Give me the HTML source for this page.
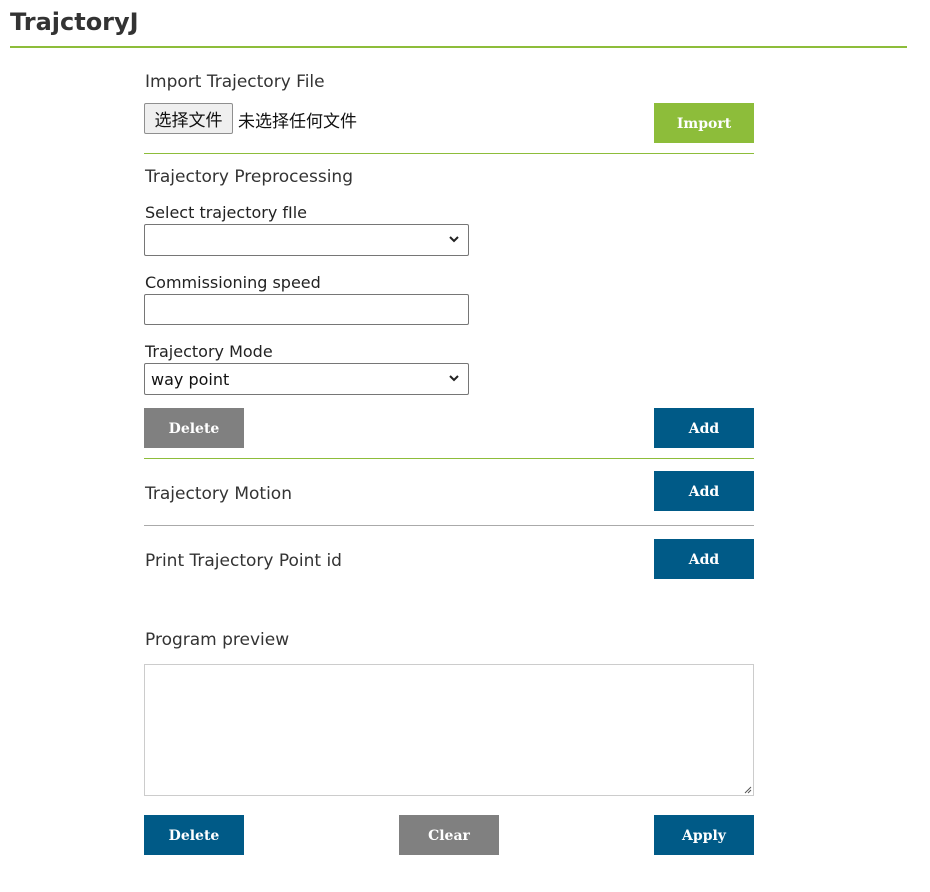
<!DOCTYPE html>
<html><head><meta charset="utf-8"><style>
body{margin:0;width:930px;height:892px;background:#fff;font-family:"DejaVu Sans","Liberation Sans","Noto Sans CJK SC",sans-serif;color:#333;position:relative;overflow:hidden}
.a{position:absolute}
.t{font-size:17px;color:#333;white-space:nowrap}
.l{font-size:16px;color:#222;white-space:nowrap}
.btn{position:absolute;width:100px;height:40px;color:#fff;font:bold 14px "DejaVu Serif","Liberation Serif",serif;display:flex;align-items:center;justify-content:center;padding-top:2px;box-sizing:border-box}
.blue{background:#005a87}.gray{background:#808080}.green{background:#8dbd3a}
.box{position:absolute;left:144px;width:323px;border:1px solid #767676;border-radius:2px;background:#fff}
.chev{position:absolute;right:8px;top:8px}
</style></head><body>
<div class="a" style="left:10px;top:8px;font-size:24px;font-weight:bold;color:#333">TrajctoryJ</div>
<div class="a" style="left:10px;top:46px;width:897px;height:2px;background:#8dbd3a"></div>

<div class="a t" style="left:145px;top:72px">Import Trajectory File</div>
<div class="a" style="left:144px;top:103px;width:87px;height:29px;border:1px solid #8f8f8f;border-radius:2px;background:#efefef;font:17px 'Noto Sans CJK SC',sans-serif;color:#111;display:flex;align-items:center;justify-content:center">选择文件</div>
<div class="a" style="left:238px;top:107px;font:17px 'Noto Sans CJK SC',sans-serif;color:#111">未选择任何文件</div>
<div class="btn green" style="left:654px;top:103px">Import</div>
<div class="a" style="left:144px;top:153px;width:610px;height:1px;background:#8dbd3a"></div>

<div class="a t" style="left:145px;top:167px">Trajectory Preprocessing</div>
<div class="a l" style="left:145px;top:203px">Select trajectory fIle</div>
<div class="box" style="top:224px;height:30px"><svg class="chev" width="12" height="12" viewBox="0 0 12 12"><path d="M2 4l4 4 4-4" fill="none" stroke="#222" stroke-width="2"/></svg></div>
<div class="a l" style="left:145px;top:273px">Commissioning speed</div>
<div class="box" style="top:294px;height:29px"></div>
<div class="a l" style="left:145px;top:342px">Trajectory Mode</div>
<div class="box" style="top:363px;height:30px"><span class="a" style="left:6px;top:6px;font-size:16px;color:#111">way point</span><svg class="chev" width="12" height="12" viewBox="0 0 12 12"><path d="M2 4l4 4 4-4" fill="none" stroke="#222" stroke-width="2"/></svg></div>
<div class="btn gray" style="left:144px;top:408px">Delete</div>
<div class="btn blue" style="left:654px;top:408px">Add</div>
<div class="a" style="left:144px;top:458px;width:610px;height:1px;background:#8dbd3a"></div>

<div class="a t" style="left:145px;top:484px">Trajectory Motion</div>
<div class="btn blue" style="left:654px;top:471px">Add</div>
<div class="a" style="left:144px;top:525px;width:610px;height:1px;background:#aaa"></div>

<div class="a t" style="left:145px;top:551px">Print Trajectory Point id</div>
<div class="btn blue" style="left:654px;top:539px">Add</div>

<div class="a t" style="left:145px;top:630px">Program preview</div>
<div class="a" style="left:144px;top:664px;width:608px;height:130px;border:1px solid #ccc"><svg class="a" style="right:1px;bottom:1px" width="10" height="10" viewBox="0 0 10 10"><path d="M9 3L3 9M9 6L6 9" stroke="#555" stroke-width="1"/></svg></div>
<div class="btn blue" style="left:144px;top:815px">Delete</div>
<div class="btn gray" style="left:399px;top:815px">Clear</div>
<div class="btn blue" style="left:654px;top:815px">Apply</div>
</body></html>
